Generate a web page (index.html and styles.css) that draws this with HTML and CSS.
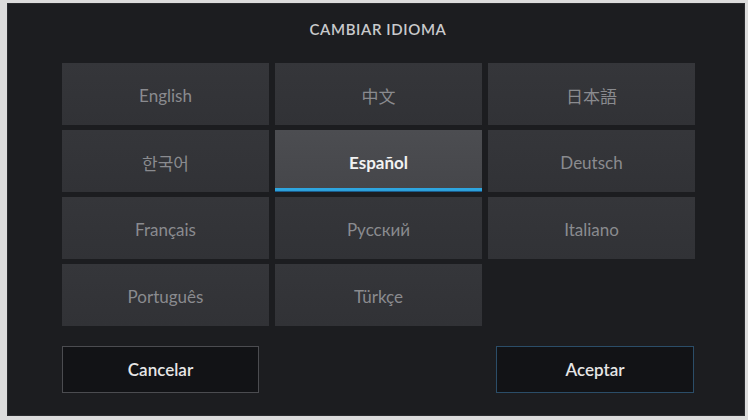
FILE: index.html
```html
<!DOCTYPE html>
<html lang="es">
<head>
<meta charset="utf-8">
<link rel="stylesheet" href="styles.css">
</head>
<body>
<div class="panel">
  <div class="title">CAMBIAR IDIOMA</div>
  <div class="grid">
    <div class="cell">English</div>
    <div class="cell">中文</div>
    <div class="cell">日本語</div>
    <div class="cell">한국어</div>
    <div class="cell selected">Español</div>
    <div class="cell">Deutsch</div>
    <div class="cell">Français</div>
    <div class="cell">Русский</div>
    <div class="cell">Italiano</div>
    <div class="cell">Português</div>
    <div class="cell">Türkçe</div>
  </div>
  <div class="actions">
    <div class="btn cancel">Cancelar</div>
    <div class="btn accept">Aceptar</div>
  </div>
</div>
</body>
</html>
```
FILE: styles.css
```css
html, body {
  margin: 0;
  padding: 0;
}
body {
  background: #dcdcdc;
  width: 748px;
  height: 420px;
  overflow: hidden;
  font-family: Lato, "Noto Sans CJK SC", "Noto Sans CJK KR", sans-serif;
}
.panel {
  box-sizing: border-box;
  margin: 3px 3px 0 7px;
  width: 738px;
  height: 413px;
  background: #1c1d20;
  border: 1px solid #2a2b2e;
  padding: 0 50px 0 54px;
}
.title {
  padding-top: 16px;
  height: 43px;
  line-height: 18px;
  text-align: center;
  color: #c9cacc;
  font-size: 15px;
  font-weight: 600;
  letter-spacing: 0.6px;
}
.grid {
  display: grid;
  grid-template-columns: repeat(3, 207px);
  grid-auto-rows: 62px;
  column-gap: 6px;
  row-gap: 5px;
}
.cell {
  position: relative;
  display: flex;
  align-items: center;
  justify-content: center;
  padding-top: 3px;
  box-sizing: border-box;
  background: linear-gradient(#35363a, #313236);
  color: #8a8b8f;
  font-size: 17px;
}
.cell.selected {
  background: linear-gradient(#4c4d51, #45464a);
  color: #f2f2f2;
  font-weight: 700;
}
.cell.selected::after {
  content: "";
  position: absolute;
  left: 0;
  right: 0;
  bottom: 0;
  height: 4px;
  background: linear-gradient(#2ea6e0 0, #2ea6e0 60%, #123a66 100%);
}
.actions {
  display: flex;
  justify-content: space-between;
  margin-top: 20px;
}
.btn {
  box-sizing: border-box;
  height: 47px;
  display: flex;
  align-items: center;
  justify-content: center;
  background: #121316;
  color: #e6e6e6;
  font-size: 17px;
  font-weight: 600;
}
.cancel {
  width: 197px;
  border: 1px solid #4b4c50;
}
.accept {
  width: 198px;
  border: 1px solid #2b4d68;
}
```
